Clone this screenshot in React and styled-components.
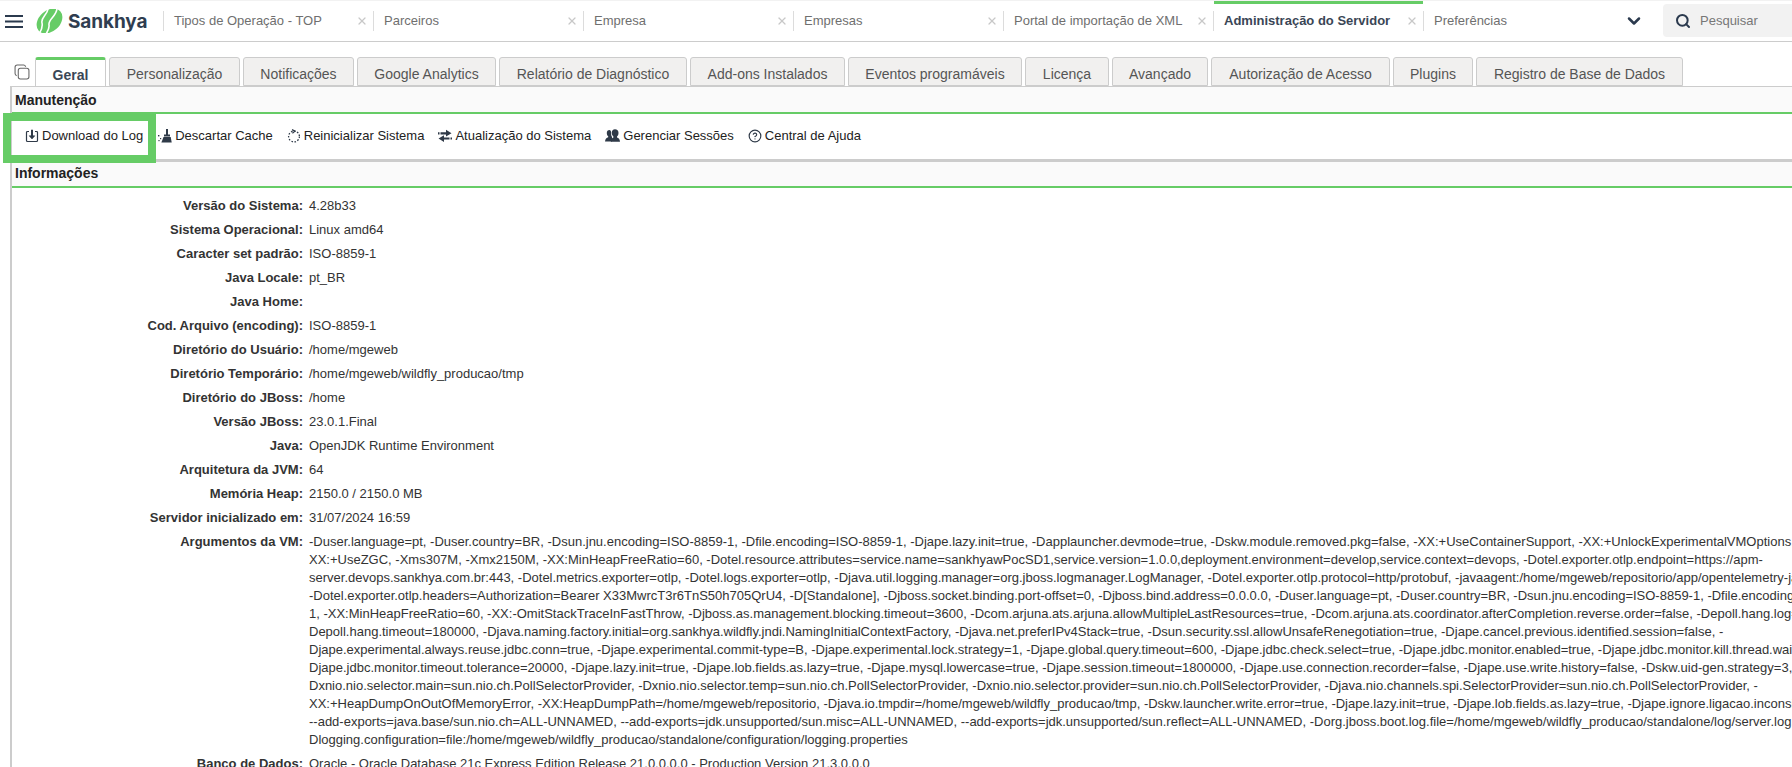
import React from "react";
import styled, { createGlobalStyle } from "styled-components";
import { Search, ChevronDown, X, CircleHelp } from "lucide-react";

const GlobalStyle = createGlobalStyle`
  html, body {
    margin: 0;
    padding: 0;
    height: 100%;
    overflow: hidden;
    background: #fff;
    font-family: "Liberation Sans", Arial, sans-serif;
  }
`;

const Page = styled.div`
  width: 1792px;
  height: 767px;
  overflow: hidden;
  position: relative;
  background: #fff;
`;

const Header = styled.header`
  display: flex;
  align-items: stretch;
  height: 40px;
  border-top: 1px solid #f2f2f2;
  border-bottom: 1px solid #ccc;
  box-sizing: content-box;
`;

const Burger = styled.div`
  width: 36px;
  display: flex;
  align-items: center;
  padding-left: 5px;
  box-sizing: border-box;
  color: #2b3a4e;
`;

const Brand = styled.div`
  width: 127px;
  display: flex;
  align-items: center;
  gap: 5px;
`;

const BrandName = styled.span`
  font-family: Inter, sans-serif;
  font-weight: 700;
  font-size: 19px;
  letter-spacing: -0.1px;
  color: #2f3d50;
`;

const AppTab = styled.div`
  position: relative;
  width: 210px;
  flex: none;
  display: flex;
  align-items: center;
  justify-content: space-between;
  box-sizing: border-box;
  padding: 0 5px 1px 10px;
  margin: 10px 0;
  border-left: 1px solid #dcdcdc;
  font-size: 13px;
  font-weight: ${(p) => (p.$active ? 700 : 400)};
  color: ${(p) => (p.$active ? "#3a4656" : "#6f6f6f")};
  &::before {
    content: "";
    display: ${(p) => (p.$active ? "block" : "none")};
    position: absolute;
    left: 0;
    right: 0;
    top: -10px;
    height: 3px;
    background: #66cc66;
  }
`;

const CloseIcon = styled(X)`
  color: #c8c8c8;
  flex: none;
`;

const MoreButton = styled.div`
  position: relative;
  width: 36px;
  margin-left: -15px;
  padding-right: 4px;
  box-sizing: border-box;
  display: flex;
  align-items: center;
  justify-content: center;
  background: #fff;
  color: #2b3a4e;
`;

const SearchBox = styled.div`
  flex: 1;
  display: flex;
  align-items: center;
  gap: 9px;
  margin: 3px 0 4px 9px;
  padding-left: 12px;
  background: #f2f2f2;
  border-radius: 4px 0 0 4px;
  font-size: 13px;
  color: #777;
  svg {
    color: #2b3a4e;
  }
`;

const TabStrip = styled.nav`
  display: flex;
  align-items: flex-end;
  gap: 3px;
  height: 29px;
  margin-top: 15px;
  padding-left: 14px;
`;

const CopyBox = styled.div`
  width: 21px;
  height: 29px;
  margin-right: -3px;
  color: #666;
  display: flex;
  align-items: center;
`;

const Tab = styled.div`
  height: 29px;
  width: ${(p) => p.$width}px;
  display: flex;
  align-items: center;
  justify-content: center;
  box-sizing: border-box;
  padding-top: ${(p) => (p.$active ? 3 : 5)}px;
  font-size: 14px;
  border: 1px solid #ccc;
  border-bottom: ${(p) => (p.$active ? "none" : "1px solid #ccc")};
  border-top: ${(p) => (p.$active ? "3px solid #66cc66" : "1px solid #ccc")};
  border-radius: 3px 3px 0 0;
  background: ${(p) => (p.$active ? "#fff" : "#f1f0ef")};
  font-weight: ${(p) => (p.$active ? 700 : 400)};
  color: ${(p) => (p.$active ? "#3a4656" : "#555")};
`;

const Panel = styled.main`
  margin-left: 10px;
  border-left: 2px solid #ccc;
`;

const SectionTitle = styled.div`
  height: ${(p) => p.$height}px;
  display: flex;
  align-items: center;
  padding: 0 0 ${(p) => p.$lift || 0}px 3px;
  background: #fafafa;
  border-top: ${(p) => (p.$first ? "1px solid #ccc" : "none")};
  border-bottom: 2px solid #66cc66;
  box-sizing: content-box;
  font-size: 14px;
  font-weight: 700;
  color: #222;
`;

const Toolbar = styled.div`
  display: flex;
  align-items: center;
  height: 43px;
  padding: 0 0 2px 13px;
  border-bottom: 3px solid #ccc;
  gap: 14px;
`;

const ToolButton = styled.div`
  display: flex;
  align-items: center;
  gap: 3px;
  font-size: 13px;
  color: #222;
  white-space: nowrap;
  &:first-child {
    padding-right: 1px;
  }
`;

const IconSvg = styled.svg`
  width: ${(p) => p.$size || 14}px;
  height: ${(p) => p.$size || 14}px;
  color: #2f3a48;
  flex: none;
`;

const Highlight = styled.div`
  position: absolute;
  left: 3px;
  top: 113px;
  width: 153px;
  height: 50px;
  box-sizing: border-box;
  border: 8px solid #66cc66;
  pointer-events: none;
`;

const InfoTable = styled.div`
  padding-top: 6px;
  width: 2200px;
`;

const Row = styled.div`
  display: grid;
  grid-template-columns: 291px 1fr;
  column-gap: 6px;
  padding: 3px 0;
  font-size: 13px;
  line-height: 18px;
  color: #333;
`;

const Label = styled.div`
  text-align: right;
  font-weight: 700;
  color: #333;
`;

const Value = styled.div`
  min-height: 18px;
`;

const ValueLine = styled.div`
  white-space: nowrap;
`;

const DownloadIcon = () => (
  <IconSvg viewBox="0 0 14 14" fill="none" stroke="currentColor" strokeWidth="1.2">
    <path d="M4 2.500H2.500a1 1 0 0 0-1 1v8a1 1 0 0 0 1 1h9a1 1 0 0 0 1-1v-8a1 1 0 0 0-1-1H10" />
    <path d="M7 .8v7" strokeWidth="2" />
    <path d="M4.200 6.800 7 10l2.800-3.200z" fill="currentColor" strokeWidth="0.6" />
  </IconSvg>
);

const BroomIcon = () => (
  <IconSvg viewBox="0 0 14 14" fill="currentColor">
    <rect x="8" y="0" width="2" height="6" />
    <rect x="6" y="5.500" width="6" height="2" />
    <path d="M5.500 8h7.200l1 5.500H3.400z" />
    <rect x="0" y="6" width="1.400" height="1.400" />
    <rect x="2" y="9" width="1.200" height="1.200" />
    <rect x="0.400" y="11" width="1.200" height="1.200" />
  </IconSvg>
);

const RestartIcon = () => (
  <IconSvg viewBox="0 0 14 14" fill="none" stroke="currentColor" strokeWidth="1.300">
    <circle cx="7" cy="7.500" r="5.400" strokeDasharray="1.600 1.500" />
    <path d="M5 .6 8 2.200 5.400 4.200" strokeWidth="1.200" />
  </IconSvg>
);

const SwapIcon = () => (
  <IconSvg viewBox="0 0 14 14" fill="currentColor">
    <path d="M0 3.200h1.500v2.200H0zM2.500 3.200h5.500V.8l5.500 3.500L8 7.600V5.400H2.500z" />
    <path d="M14 8.400h-1.500v2.200H14zM11.500 8.400H6V6.200L.5 9.600 6 13v-2.400h5.500z" />
  </IconSvg>
);

const UsersIcon = () => (
  <IconSvg $size={15} viewBox="0 0 15 15" fill="currentColor">
    <path d="M4.500 2C2.800 2 1.800 3.200 1.800 5c0 1.500.5 2.600 1.400 3.300v1C1.600 10 .3 10.600 0 13.500h7V8.800C6 7.600 6.200 6 6.200 4.400 6.100 3 5.400 2 4.500 2z" />
    <path d="M10 1.200c-2 0-3.200 1.400-3.200 3.500 0 1.700.6 3 1.600 3.800v1c-1.400.5-2.400 1.400-2.600 4.200H15c-.2-2.800-1.400-3.700-3-4.200v-1c1-.8 1.500-2.100 1.500-3.800 0-2.100-1.400-3.500-3.500-3.500z" />
  </IconSvg>
);

const LogoMark = () => (
  <svg width="27" height="24" viewBox="0 0 27 24">
    <ellipse cx="13.500" cy="12" rx="14.500" ry="10.500" transform="rotate(-42 13.500 12)" fill="#66cc66" />
    <path d="M12 -1C12.500 5 4.500 8 6 14C6.800 17.500 5.500 21 3 25" fill="none" stroke="#fff" strokeWidth="1.600" />
    <path d="M21 -1C21 7 12 10 13 16C13.500 19 12 22 10 25" fill="none" stroke="#fff" strokeWidth="1.600" />
  </svg>
);

const tabsTop = [
  { label: "Tipos de Operação - TOP" },
  { label: "Parceiros" },
  { label: "Empresa" },
  { label: "Empresas" },
  { label: "Portal de importação de XML" },
  { label: "Administração do Servidor", active: true },
  { label: "Preferências" },
];

const subTabs = [
  { label: "Geral", width: 71, active: true },
  { label: "Personalização", width: 131 },
  { label: "Notificações", width: 111 },
  { label: "Google Analytics", width: 139 },
  { label: "Relatório de Diagnóstico", width: 188 },
  { label: "Add-ons Instalados", width: 155 },
  { label: "Eventos programáveis", width: 174 },
  { label: "Licença", width: 84 },
  { label: "Avançado", width: 96 },
  { label: "Autorização de Acesso", width: 179 },
  { label: "Plugins", width: 80 },
  { label: "Registro de Base de Dados", width: 207 },
];

const tools = [
  { label: "Download do Log", icon: <DownloadIcon /> },
  { label: "Descartar Cache", icon: <BroomIcon /> },
  { label: "Reinicializar Sistema", icon: <RestartIcon /> },
  { label: "Atualização do Sistema", icon: <SwapIcon /> },
  { label: "Gerenciar Sessões", icon: <UsersIcon /> },
  { label: "Central de Ajuda", icon: <CircleHelp size={14} color="#2f3a48" /> },
];

const vmArgs = [
  "-Duser.language=pt, -Duser.country=BR, -Dsun.jnu.encoding=ISO-8859-1, -Dfile.encoding=ISO-8859-1, -Djape.lazy.init=true, -Dapplauncher.devmode=true, -Dskw.module.removed.pkg=false, -XX:+UseContainerSupport, -XX:+UnlockExperimentalVMOptions, -",
  "XX:+UseZGC, -Xms307M, -Xmx2150M, -XX:MinHeapFreeRatio=60, -Dotel.resource.attributes=service.name=sankhyawPocSD1,service.version=1.0.0,deployment.environment=develop,service.context=devops, -Dotel.exporter.otlp.endpoint=https://apm-",
  "server.devops.sankhya.com.br:443, -Dotel.metrics.exporter=otlp, -Dotel.logs.exporter=otlp, -Djava.util.logging.manager=org.jboss.logmanager.LogManager, -Dotel.exporter.otlp.protocol=http/protobuf, -javaagent:/home/mgeweb/repositorio/app/opentelemetry-javaagent.jar,",
  "-Dotel.exporter.otlp.headers=Authorization=Bearer X33MwrcT3r6TnS50h705QrU4, -D[Standalone], -Djboss.socket.binding.port-offset=0, -Djboss.bind.address=0.0.0.0, -Duser.language=pt, -Duser.country=BR, -Dsun.jnu.encoding=ISO-8859-1, -Dfile.encoding=ISO-8859-1,",
  "1, -XX:MinHeapFreeRatio=60, -XX:-OmitStackTraceInFastThrow, -Djboss.as.management.blocking.timeout=3600, -Dcom.arjuna.ats.arjuna.allowMultipleLastResources=true, -Dcom.arjuna.ats.coordinator.afterCompletion.reverse.order=false, -Depoll.hang.log=true, -",
  "Depoll.hang.timeout=180000, -Djava.naming.factory.initial=org.sankhya.wildfly.jndi.NamingInitialContextFactory, -Djava.net.preferIPv4Stack=true, -Dsun.security.ssl.allowUnsafeRenegotiation=true, -Djape.cancel.previous.identified.session=false, -",
  "Djape.experimental.always.reuse.jdbc.conn=true, -Djape.experimental.commit-type=B, -Djape.experimental.lock.strategy=1, -Djape.global.query.timeout=600, -Djape.jdbc.check.select=true, -Djape.jdbc.monitor.enabled=true, -Djape.jdbc.monitor.kill.thread.wait=true, -",
  "Djape.jdbc.monitor.timeout.tolerance=20000, -Djape.lazy.init=true, -Djape.lob.fields.as.lazy=true, -Djape.mysql.lowercase=true, -Djape.session.timeout=1800000, -Djape.use.connection.recorder=false, -Djape.use.write.history=false, -Dskw.uid-gen.strategy=3, -",
  "Dxnio.nio.selector.main=sun.nio.ch.PollSelectorProvider, -Dxnio.nio.selector.temp=sun.nio.ch.PollSelectorProvider, -Dxnio.nio.selector.provider=sun.nio.ch.PollSelectorProvider, -Djava.nio.channels.spi.SelectorProvider=sun.nio.ch.PollSelectorProvider, -",
  "XX:+HeapDumpOnOutOfMemoryError, -XX:HeapDumpPath=/home/mgeweb/repositorio, -Djava.io.tmpdir=/home/mgeweb/wildfly_producao/tmp, -Dskw.launcher.write.error=true, -Djape.lazy.init=true, -Djape.lob.fields.as.lazy=true, -Djape.ignore.ligacao.inconsistente=true,",
  "--add-exports=java.base/sun.nio.ch=ALL-UNNAMED, --add-exports=jdk.unsupported/sun.misc=ALL-UNNAMED, --add-exports=jdk.unsupported/sun.reflect=ALL-UNNAMED, -Dorg.jboss.boot.log.file=/home/mgeweb/wildfly_producao/standalone/log/server.log, -",
  "Dlogging.configuration=file:/home/mgeweb/wildfly_producao/standalone/configuration/logging.properties",
];

const infoRows = [
  ["Versão do Sistema:", ["4.28b33"]],
  ["Sistema Operacional:", ["Linux amd64"]],
  ["Caracter set padrão:", ["ISO-8859-1"]],
  ["Java Locale:", ["pt_BR"]],
  ["Java Home:", [""]],
  ["Cod. Arquivo (encoding):", ["ISO-8859-1"]],
  ["Diretório do Usuário:", ["/home/mgeweb"]],
  ["Diretório Temporário:", ["/home/mgeweb/wildfly_producao/tmp"]],
  ["Diretório do JBoss:", ["/home"]],
  ["Versão JBoss:", ["23.0.1.Final"]],
  ["Java:", ["OpenJDK Runtime Environment"]],
  ["Arquitetura da JVM:", ["64"]],
  ["Memória Heap:", ["2150.0 / 2150.0 MB"]],
  ["Servidor inicializado em:", ["31/07/2024 16:59"]],
  ["Argumentos da VM:", vmArgs],
  ["Banco de Dados:", ["Oracle - Oracle Database 21c Express Edition Release 21.0.0.0.0 - Production Version 21.3.0.0.0"]],
];

const App = () => {
  return (
    <Page>
      <GlobalStyle />
      <Header>
        <Burger>
          <svg width="18" height="13" viewBox="0 0 18 13" fill="currentColor">
            <rect x="0" y="0" width="18" height="2" />
            <rect x="0" y="5.500" width="18" height="2" />
            <rect x="0" y="11" width="18" height="2" />
          </svg>
        </Burger>
        <Brand>
          <LogoMark />
          <BrandName>Sankhya</BrandName>
        </Brand>
        {tabsTop.map((t) => (
          <AppTab key={t.label} $active={t.active}>
            <span>{t.label}</span>
            <CloseIcon size={12} strokeWidth={2.5} />
          </AppTab>
        ))}
        <MoreButton>
          <ChevronDown size={20} strokeWidth={3} />
        </MoreButton>
        <SearchBox>
          <Search size={16} strokeWidth={3} />
          Pesquisar
        </SearchBox>
      </Header>

      <TabStrip>
        <CopyBox>
          <svg width="16" height="16" viewBox="0 0 15 15" fill="none" stroke="currentColor" strokeWidth="1">
            <rect x="4" y="4" width="10" height="10" rx="2" />
            <path d="M11 2.500C10.500 1.500 10 1 9 1H3C1.800 1 1 1.800 1 3v6c0 1 .5 1.500 1.500 2" />
          </svg>
        </CopyBox>
        {subTabs.map((t) => (
          <Tab key={t.label} $width={t.width} $active={t.active}>
            {t.label}
          </Tab>
        ))}
      </TabStrip>

      <Panel>
        <SectionTitle $first $height={25}>Manutenção</SectionTitle>
        <Toolbar>
          {tools.map((t) => (
            <ToolButton key={t.label}>
              {t.icon}
              {t.label}
            </ToolButton>
          ))}
        </Toolbar>
        <SectionTitle $height={22} $lift={2}>Informações</SectionTitle>
        <InfoTable>
          {infoRows.map(([label, lines]) => (
            <Row key={label}>
              <Label>{label}</Label>
              <Value>
                {lines.map((l, i) => (
                  <ValueLine key={i}>{l}</ValueLine>
                ))}
              </Value>
            </Row>
          ))}
        </InfoTable>
      </Panel>

      <Highlight />
    </Page>
  );
};

export default App;
